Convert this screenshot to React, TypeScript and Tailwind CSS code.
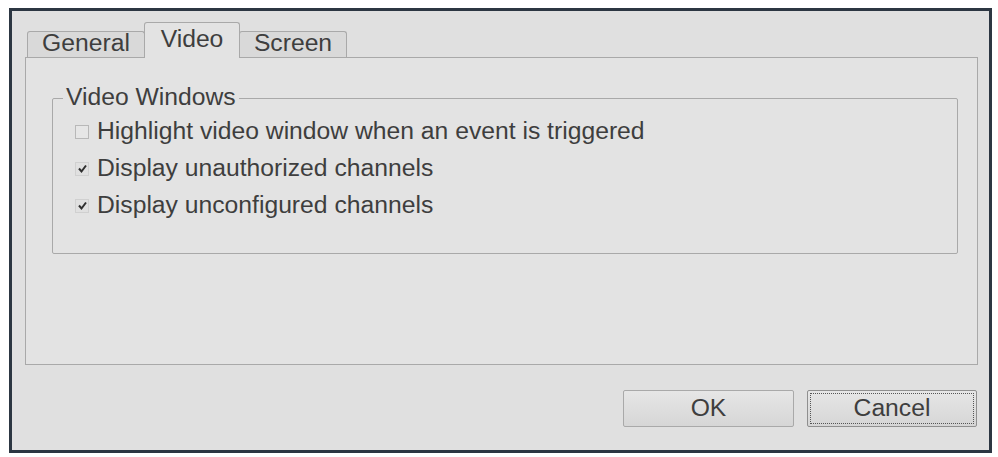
import React from 'react';

const font = { fontFamily: '"Liberation Sans", Arial, sans-serif' };

const Tab: React.FC<{ label: string; active?: boolean; width: string }> = ({ label, active, width }) => (
  <div
    className={`${width} flex items-center justify-center border border-b-0 border-[#a9a9a9] rounded-t-[3px] ${
      active ? 'h-[36px] bg-[#e3e3e3] -mb-px relative z-10 -mx-px' : 'h-[26px] bg-[#d9d9d9]'
    }`}
  >
    <span className="text-[24.7px] leading-none text-[#3e3e3e] -mt-[2px]">{label}</span>
  </div>
);

const Check: React.FC<{ label: string; checked?: boolean }> = ({ label, checked }) => (
  <div className="flex items-center h-[37px] gap-[8px]">
    <div
      className={`w-[14px] h-[14px] border flex items-center justify-center ${
        checked ? 'border-[#d0d0d0] bg-[#e0e0e0]' : 'border-[#b8b8b8] bg-[#e6e6e6]'
      }`}
    >
      {checked && (
        <svg width="11" height="11" viewBox="0 0 11 11">
          <path d="M2 5.5 L4.5 8.5 L9 2.5" fill="none" stroke="#2e2e2e" strokeWidth="2" />
        </svg>
      )}
    </div>
    <span className="text-[24.7px] leading-none text-[#3e3e3e]">{label}</span>
  </div>
);

export default function App() {
  return (
    <div className="w-[998px] h-[457px] bg-white pt-[8px] pl-[9px]" style={font}>
      <div className="w-[983px] h-[445px] border-[3px] border-[#2c3642] bg-[#e0e0e0] flex flex-col pl-[13px] pr-[11px] pt-[11px]">
        {/* Tabs */}
        <div className="flex items-end pl-[2px] h-[35px]">
          <Tab label="General" width="w-[118px]" />
          <Tab label="Video" width="w-[96px]" active />
          <Tab label="Screen" width="w-[108px]" />
        </div>

        {/* Panel */}
        <div className="h-[308px] border border-[#a9a9a9] bg-[#e3e3e3] pl-[26px] pr-[19px] pt-[40px]">
          <div className="relative h-[156px] border border-[#a9a9a9] rounded-[2px] pl-[22px] pt-[14px]">
            <span className="absolute -top-[14px] left-[10px] px-[3px] bg-[#e3e3e3] text-[24.7px] leading-none text-[#3e3e3e]">
              Video Windows
            </span>
            <Check label="Highlight video window when an event is triggered" />
            <Check label="Display unauthorized channels" checked />
            <Check label="Display unconfigured channels" checked />
          </div>
        </div>

        {/* Buttons */}
        <div className="flex justify-end gap-[13px] pr-[1px] mt-[25px]">
          <button className="w-[171px] h-[37px] border border-[#a9a9a9] rounded-[2px] bg-gradient-to-b from-[#e6e6e6] to-[#d6d6d6] text-[24.7px] leading-none text-[#3e3e3e]">
            OK
          </button>
          <button className="w-[170px] h-[37px] border border-[#8f8f8f] rounded-[2px] bg-gradient-to-b from-[#e6e6e6] to-[#d6d6d6] p-[2px]">
            <div className="w-full h-full border border-dotted border-[#555] flex items-center justify-center text-[24.7px] leading-none text-[#3e3e3e]">
              Cancel
            </div>
          </button>
        </div>
      </div>
    </div>
  );
}
